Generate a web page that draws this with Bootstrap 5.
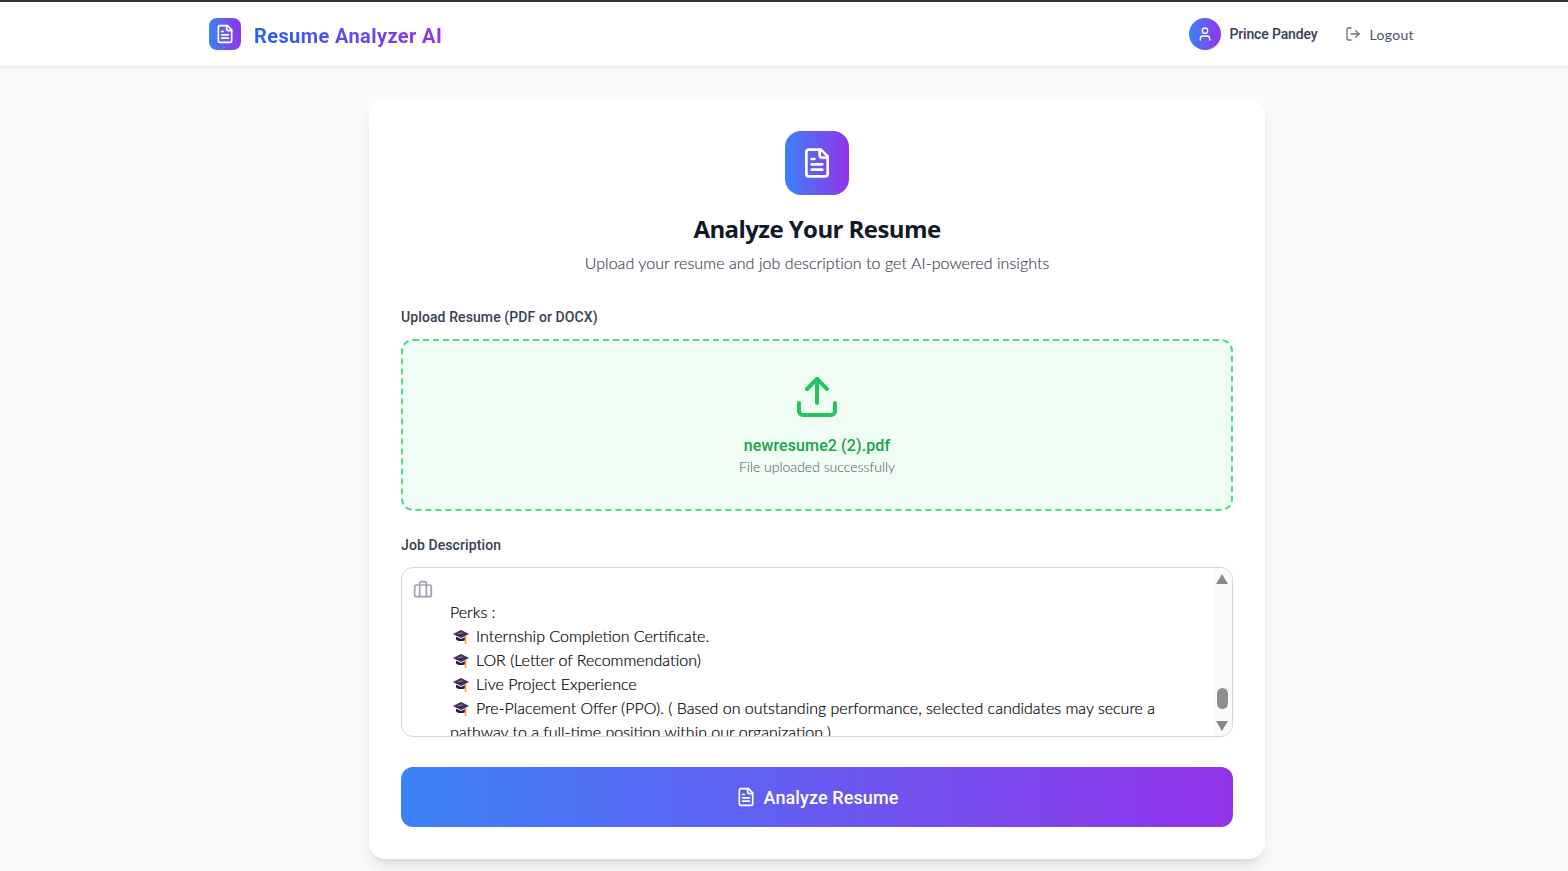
<!DOCTYPE html>
<html lang="en">
<head>
    <meta charset="UTF-8">
    <meta name="viewport" content="width=device-width, initial-scale=1.0">
    <title>Resume Analyzer AI</title>
    <link rel="stylesheet" href="https://cdn.jsdelivr.net/npm/bootstrap@5.3.3/dist/css/bootstrap.min.css">
    <style>
        html, body { height: 871px; overflow: hidden; }
        body { background: #f9fafb; font-family: Lato, "Noto Sans", sans-serif; color: #111827; }
        .page-wrap { width: 1634px; }
        .top-line { height: 2px; background: #333; }
        .app-header { background: #fff; border-bottom: 1px solid #e5e7eb; box-shadow: 0 1px 2px rgba(0,0,0,.05); }
        .header-inner { width: 1280px; height: 64px; padding: 0 32px; margin: 0 auto; }
        .grad-bg { background: linear-gradient(to right, #3b82f6, #9333ea); }
        .logo-box { width: 32px; height: 32px; border-radius: 8px; }
        .brand-text { font-family: Roboto, sans-serif; font-size: 20px; font-weight: 700; line-height: 28px; letter-spacing: .4px; margin: 4px 0 0 13px; background: linear-gradient(to right, #2563eb, #9333ea); -webkit-background-clip: text; background-clip: text; color: transparent; }
        .avatar-box { width: 32px; height: 32px; border-radius: 50%; }
        .user-name { font-family: Roboto, sans-serif; font-size: 14px; font-weight: 500; letter-spacing: -.15px; color: #374151; margin-left: 8px; }
        .logout-link { font-size: 14px; letter-spacing: .35px; color: #4b5563; padding: 8px 11px 8px 12px; margin-left: 16px; text-decoration: none; gap: 8px; }
        .main-card { width: 896px; margin: 32px auto 0; padding: 32px; background: #fff; border-radius: 16px; box-shadow: 0 10px 15px -3px rgba(0,0,0,.1), 0 4px 6px -4px rgba(0,0,0,.1); }
        .hero-box { width: 64px; height: 64px; border-radius: 16px; margin: 0 auto 16px; }
        .hero-title { font-family: "Open Sans", sans-serif; font-size: 24px; font-weight: 700; line-height: 32px; letter-spacing: -.58px; padding-top: 2px; margin-bottom: 6px; color: #111827; }
        .hero-sub { font-size: 16px; font-weight: 300; line-height: 24px; letter-spacing: .06px; color: #374151; -webkit-text-stroke: .15px #374151; margin-bottom: 32px; }
        .field-label { display: block; font-family: Roboto, sans-serif; font-size: 14px; font-weight: 500; line-height: 20px; letter-spacing: .1px; color: #374151; margin-bottom: 12px; }
        .drop-zone { border: 2px dashed #4ade80; background: #f0fdf4; border-radius: 12px; padding: 32px; text-align: center; margin-bottom: 24px; }
        .file-name { font-family: Roboto, sans-serif; font-size: 16px; font-weight: 500; line-height: 23px; letter-spacing: .1px; color: #16a34a; margin-top: 13px; }
        .file-note { font-size: 14px; font-weight: 300; line-height: 20px; color: #4b5563; }
        .desc-box { position: relative; height: 170px; border: 1px solid #d1d5db; border-radius: 12px; overflow: hidden; background: #fff; padding: 32px 48px 0; font-size: 16px; font-weight: 300; line-height: 24px; color: #000; -webkit-text-stroke: .2px #000; }
        .brief-icon { position: absolute; left: 11px; top: 12px; }
        .cap-icon { width: 16px; height: 16px; margin: 0 7px 0 3px; vertical-align: -3px; }
        .bar-track { position: absolute; top: 0; right: 0; bottom: 0; width: 18px; background: #fafafa; }
        .bar-up, .bar-down { position: absolute; left: 2px; width: 0; height: 0; border-left: 6.5px solid transparent; border-right: 6.5px solid transparent; }
        .bar-up { top: 6px; border-bottom: 10px solid #8a8a8a; }
        .bar-down { bottom: 5px; border-top: 10px solid #8a8a8a; }
        .bar-thumb { position: absolute; left: 3px; top: 120px; width: 11px; height: 21px; border-radius: 6px; background: #8e8e8e; }
        .analyze-btn { width: 100%; height: 60px; margin-top: 30px; border: 0; border-radius: 12px; color: #fff; font-family: Roboto, sans-serif; font-size: 18px; font-weight: 500; letter-spacing: .1px; gap: 8px; }
    </style>
</head>
<body>
<div class="page-wrap">
    <div class="top-line"></div>
    <header class="app-header">
        <div class="header-inner d-flex align-items-center justify-content-between">
            <div class="d-flex align-items-center">
                <div class="logo-box grad-bg d-flex align-items-center justify-content-center">
                    <svg width="20" height="20" viewBox="0 0 24 24" fill="none" stroke="#fff" stroke-width="2" stroke-linecap="round" stroke-linejoin="round"><path d="M15 2H6a2 2 0 0 0-2 2v16a2 2 0 0 0 2 2h12a2 2 0 0 0 2-2V7Z"/><path d="M14 2v4a2 2 0 0 0 2 2h4"/><path d="M10 9H8"/><path d="M16 13H8"/><path d="M16 17H8"/></svg>
                </div>
                <span class="brand-text">Resume Analyzer AI</span>
            </div>
            <div class="d-flex align-items-center">
                <div class="avatar-box grad-bg d-flex align-items-center justify-content-center">
                    <svg width="16" height="16" viewBox="0 0 24 24" fill="none" stroke="#fff" stroke-width="2" stroke-linecap="round" stroke-linejoin="round"><path d="M19 21v-2a4 4 0 0 0-4-4H9a4 4 0 0 0-4 4v2"/><circle cx="12" cy="7" r="4"/></svg>
                </div>
                <span class="user-name">Prince Pandey</span>
                <a href="#" class="logout-link d-flex align-items-center">
                    <svg width="16" height="16" viewBox="0 0 24 24" fill="none" stroke="#6b7280" stroke-width="2" stroke-linecap="round" stroke-linejoin="round"><path d="M9 21H5a2 2 0 0 1-2-2V5a2 2 0 0 1 2-2h4"/><polyline points="16 17 21 12 16 7"/><line x1="21" y1="12" x2="9" y2="12"/></svg>
                    Logout
                </a>
            </div>
        </div>
    </header>

    <main class="main-card">
        <div class="text-center">
            <div class="hero-box grad-bg d-flex align-items-center justify-content-center">
                <svg width="32" height="32" viewBox="0 0 24 24" fill="none" stroke="#fff" stroke-width="2" stroke-linecap="round" stroke-linejoin="round"><path d="M15 2H6a2 2 0 0 0-2 2v16a2 2 0 0 0 2 2h12a2 2 0 0 0 2-2V7Z"/><path d="M14 2v4a2 2 0 0 0 2 2h4"/><path d="M10 9H8"/><path d="M16 13H8"/><path d="M16 17H8"/></svg>
            </div>
            <h1 class="hero-title">Analyze Your Resume</h1>
            <p class="hero-sub">Upload your resume and job description to get AI-powered insights</p>
        </div>

        <label class="field-label">Upload Resume (PDF or DOCX)</label>
        <div class="drop-zone">
            <svg class="d-block mx-auto" width="48" height="48" viewBox="0 0 24 24" fill="none" stroke="#22c55e" stroke-width="2" stroke-linecap="round" stroke-linejoin="round"><path d="M21 15v4a2 2 0 0 1-2 2H5a2 2 0 0 1-2-2v-4"/><polyline points="17 8 12 3 7 8"/><line x1="12" y1="3" x2="12" y2="15"/></svg>
            <div class="file-name">newresume2 (2).pdf</div>
            <div class="file-note">File uploaded successfully</div>
        </div>

        <label class="field-label">Job Description</label>
        <div class="desc-box">
            <svg class="brief-icon" width="20" height="20" viewBox="0 0 24 24" fill="none" stroke="#9ca3af" stroke-width="2" stroke-linecap="round" stroke-linejoin="round"><path d="M16 20V4a2 2 0 0 0-2-2h-4a2 2 0 0 0-2 2v16"/><rect x="2" y="6" width="20" height="14" rx="2"/></svg>
            <div>Perks :</div>
            <div id="perkList"></div>
            <div class="bar-track">
                <div class="bar-up"></div>
                <div class="bar-thumb"></div>
                <div class="bar-down"></div>
            </div>
        </div>

        <button class="analyze-btn grad-bg d-flex align-items-center justify-content-center">
            <svg width="20" height="20" viewBox="0 0 24 24" fill="none" stroke="#fff" stroke-width="2" stroke-linecap="round" stroke-linejoin="round"><path d="M15 2H6a2 2 0 0 0-2 2v16a2 2 0 0 0 2 2h12a2 2 0 0 0 2-2V7Z"/><path d="M14 2v4a2 2 0 0 0 2 2h4"/><path d="M10 9H8"/><path d="M16 13H8"/><path d="M16 17H8"/></svg>
            Analyze Resume
        </button>
    </main>
</div>

<script>
const perks = [
    'Internship Completion Certificate.',
    'LOR (Letter of Recommendation)',
    'Live Project Experience',
    'Pre-Placement Offer (PPO). ( Based on outstanding performance, selected candidates may secure a pathway to a full-time position within our organization.)'
];
const cap = `<svg class="cap-icon" viewBox="0 0 16 16"><path d="M8 1 16 5 8 9 0 5Z" fill="#3d2d5e"/><path d="M3 7.5V10.5C5 12.5 11 12.5 13 10.5V7.5L8 10Z" fill="#2b2044"/><path d="M5 4.5 10 4" stroke="#c9a24a" stroke-width=".8"/><path d="M12.5 7V15" stroke="#f39c3d" stroke-width="1.6"/></svg>`;
const list = document.getElementById('perkList');
perks.forEach(text => {
    const row = document.createElement('div');
    row.innerHTML = cap + text;
    list.appendChild(row);
});
</script>
</body>
</html>
